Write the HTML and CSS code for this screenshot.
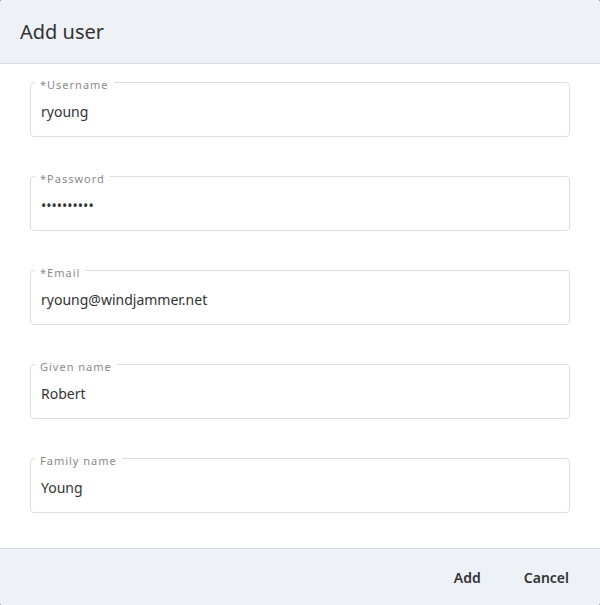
FILE: index.html
```html
<!DOCTYPE html>
<html>
<head>
<meta charset="utf-8">
<link rel="stylesheet" href="styles.css">
</head>
<body>
<div class="dialog">
  <div class="header"><h1 class="title">Add user</h1></div>
  <div class="content">
    <fieldset class="field">
      <legend class="label">*Username</legend>
      <input class="input" type="text" value="ryoung">
    </fieldset>
    <fieldset class="field">
      <legend class="label">*Password</legend>
      <input class="input" type="password" value="ryoung1234">
    </fieldset>
    <fieldset class="field">
      <legend class="label">*Email</legend>
      <input class="input" type="text" value="ryoung@windjammer.net">
    </fieldset>
    <fieldset class="field">
      <legend class="label">Given name</legend>
      <input class="input" type="text" value="Robert">
    </fieldset>
    <fieldset class="field">
      <legend class="label">Family name</legend>
      <input class="input" type="text" value="Young">
    </fieldset>
  </div>
  <div class="footer">
    <button class="btn">Add</button>
    <button class="btn">Cancel</button>
  </div>
</div>
</body>
</html>
```
FILE: styles.css
```css
html { background: #8a8a8a; }
body {
  margin: 0;
  font-family: "Noto Sans", "Open Sans", sans-serif;
  color: #333;
}
.dialog {
  width: 600px;
  height: 605px;
  background: #fff;
  border-radius: 3px;
  overflow: hidden;
  display: flex;
  flex-direction: column;
}
.header {
  height: 63px;
  background: #eef1f6;
  border-bottom: 1px solid #d9dde4;
  display: flex;
  align-items: center;
  padding-left: 20px;
}
.title {
  margin: 0;
  font-size: 20px;
  font-weight: 400;
  color: #333;
  line-height: 26px;
}
.content {
  flex: 1;
  padding: 8px 30px 0 30px;
  display: flex;
  flex-direction: column;
  gap: 29px;
}
.field {
  margin: 0;
  border: 1px solid #dedede;
  border-radius: 4px;
  padding: 0 10px;
  min-width: 0;
}
.label {
  margin-left: -6px;
  padding: 6px 5px 0 5px;
  font-size: 11px;
  line-height: 14px;
  letter-spacing: 1px;
  color: #8a8a8a;
}
.input {
  display: block;
  width: 100%;
  box-sizing: border-box;
  margin: 9px 0 15px 0;
  height: 20px;
  padding: 0;
  border: none;
  outline: none;
  background: transparent;
  font-family: inherit;
  font-size: 14px;
  color: #333;
}
.footer {
  height: 56px;
  background: #eef1f6;
  border-top: 1px solid #d2d6dd;
  display: flex;
  justify-content: flex-end;
  align-items: center;
  gap: 19px;
  padding-right: 19px;
}
.btn {
  border: none;
  background: transparent;
  font-family: inherit;
  font-size: 14px;
  font-weight: 600;
  color: #333;
  padding: 8px 12px;
  cursor: pointer;
}
```
